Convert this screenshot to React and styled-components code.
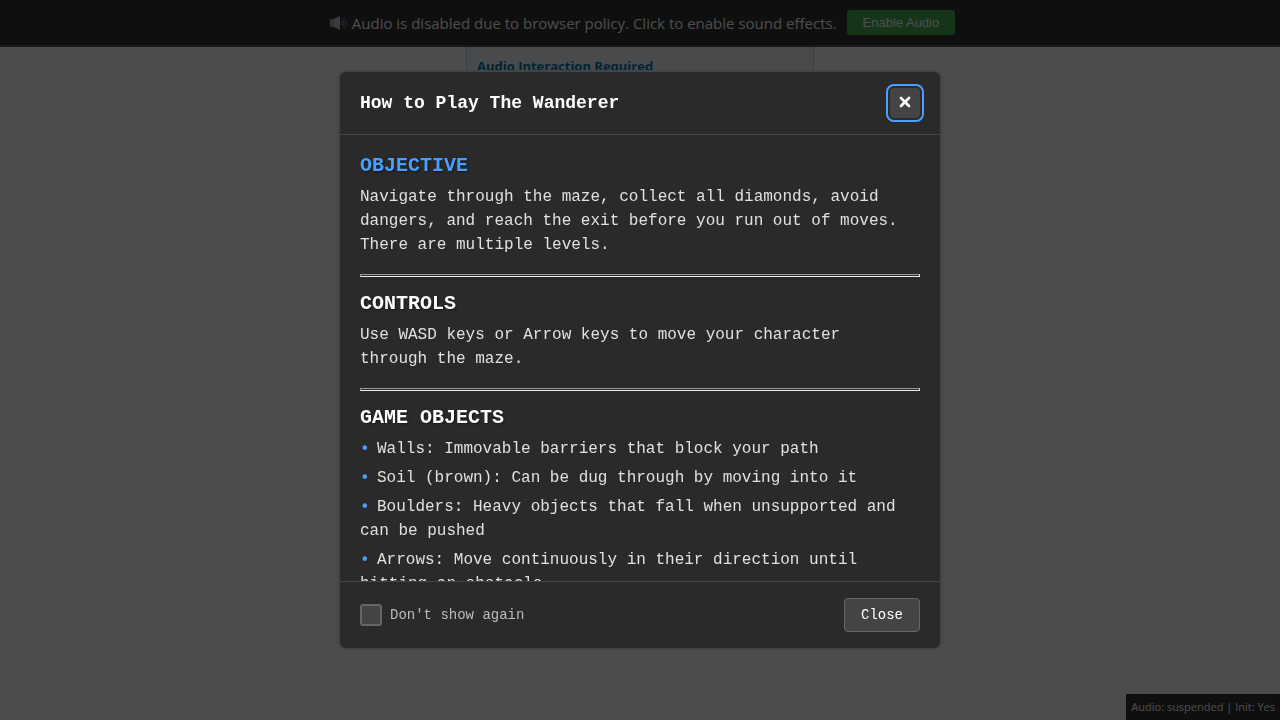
import React from "react";
import styled, { createGlobalStyle } from "styled-components";

const GlobalStyle = createGlobalStyle`
  *, *::before, *::after { box-sizing: border-box; }
  body { margin: 0; background: #fff; font-family: "Open Sans", "Noto Sans", sans-serif; }
  h1, h2, h3, p, ul { margin: 0; padding: 0; }
`;

const mono = `"Courier New", "Liberation Mono", monospace`;

const Page = styled.div`
  min-height: 100vh;
`;

const AudioBanner = styled.header`
  display: flex;
  align-items: center;
  justify-content: center;
  gap: 10px;
  height: 47px;
  padding: 0 10px 0 14px;
  background: #333;
  border-bottom: 2px solid #555;
  color: #fff;
  font-size: 15px;
  line-height: 24px;
`;

const BannerText = styled.span`
  display: flex;
  align-items: center;
  gap: 5px;
`;

const EnableButton = styled.button`
  height: 25px;
  padding: 0 16px;
  border: 0;
  border-radius: 3px;
  background: #4caf50;
  color: #fff;
  font: 13px "Liberation Sans", Arial, sans-serif;
`;

const Notice = styled.section`
  width: 348px;
  max-width: 100%;
  margin: 0 auto;
  padding: 9px 10px;
  background: #f0f8ff;
  border: 1px solid #b0d4f1;
  border-top: 0;
  color: #333;
  line-height: 20px;
`;

const NoticeTitle = styled.h3`
  color: #0077b6;
  font-size: 13px;
  font-weight: 700;
`;

const AudioStatus = styled.div`
  position: fixed;
  right: 0;
  bottom: 0;
  padding: 5px;
  background: #333;
  color: #fff;
  font-size: 11px;
  line-height: 16px;
`;

const Overlay = styled.div`
  position: fixed;
  inset: 0;
  display: flex;
  align-items: center;
  justify-content: center;
  background: rgba(0, 0, 0, 0.7);
`;

const Dialog = styled.div`
  display: flex;
  flex-direction: column;
  width: 90%;
  max-width: 600px;
  max-height: 80vh;
  border-radius: 6px;
  background: #2a2a2a;
  box-shadow: 0 0 0 2px #444;
  font-family: ${mono};
  overflow: hidden;
`;

const DialogHeader = styled.div`
  display: flex;
  align-items: center;
  justify-content: space-between;
  padding: 16px 20px;
  border-bottom: 1px solid #444;
`;

const DialogTitle = styled.h2`
  color: #fff;
  font-size: 18px;
  line-height: 24px;
`;

const IconButton = styled.button`
  display: flex;
  align-items: center;
  justify-content: center;
  width: 30px;
  height: 30px;
  padding: 0 0 2px;
  border: 0;
  border-radius: 4px;
  background: #444;
  color: #fff;
  outline: 2px solid #4a9eff;
  outline-offset: 2px;
`;

const DialogBody = styled.div`
  flex: 1;
  min-height: 0;
  padding: 20px;
  overflow-y: auto;
  scrollbar-width: none;
`;

const SectionTitle = styled.h3`
  margin-bottom: 8px;
  color: ${(p) => (p.$accent ? "#4a9eff" : "#fff")};
  font-size: 20px;
  line-height: 22px;
  text-transform: uppercase;
  text-shadow: 1px 1px 2px rgba(0, 0, 0, 0.5);
`;

const Paragraph = styled.p`
  padding-right: 8px;
  color: #e0e0e0;
  font-size: 16px;
  line-height: 24px;
`;

const Divider = styled.hr`
  height: 3px;
  margin: 17px 0 16px;
  border: 1px solid;
  border-color: #9a9a9a #eee #eee #9a9a9a;
`;

const ObjectList = styled.ul`
  list-style: none;
`;

const ObjectItem = styled.li`
  margin-bottom: 5px;
  color: #e0e0e0;
  font-size: 16px;
  line-height: 24px;

  &::before {
    content: "•";
    display: inline-block;
    width: 17px;
    color: #4a9eff;
    font-weight: 700;
  }
`;

const DialogFooter = styled.div`
  display: flex;
  align-items: center;
  justify-content: space-between;
  padding: 16px 20px;
  border-top: 1px solid #444;
`;

const CheckLabel = styled.label`
  display: flex;
  align-items: center;
  gap: 8px;
  color: #bbb;
  font-size: 14px;
  line-height: 20px;
`;

const Checkbox = styled.input`
  appearance: none;
  width: 22px;
  height: 22px;
  margin: 0;
  border: 2px solid #666;
  border-radius: 3px;
  background: #444;

  &:checked { background: #4a9eff; }
`;

const CloseButton = styled.button`
  height: 34px;
  padding: 0 16px;
  border: 1px solid #666;
  border-radius: 4px;
  background: #444;
  color: #fff;
  font: 14px ${mono};
`;

function SpeakerIcon() {
  return (
    <svg width="18" height="16" viewBox="0 0 18 16" aria-hidden="true">
      <path d="M1 4h5v8H1z" fill="#aaa4b0" />
      <path d="M5 4l6-3v14l-6-3z" fill="#c8c2ce" />
      <path
        d="M12 5.500q2 2.500 0 5M13.500 3.500q3 4.500 0 9M15 2q4 6 0 12"
        fill="none"
        stroke="#5595d0"
        strokeWidth="1"
      />
    </svg>
  );
}

const objects = [
  "Walls: Immovable barriers that block your path",
  "Soil (brown): Can be dug through by moving into it",
  "Boulders: Heavy objects that fall when unsupported and can be pushed",
  "Arrows: Move continuously in their direction until hitting an obstacle",
];

export default function App() {
  return (
    <Page>
      <GlobalStyle />
      <AudioBanner>
        <BannerText>
          <SpeakerIcon />
          Audio is disabled due to browser policy. Click to enable sound effects.
        </BannerText>
        <EnableButton type="button">Enable Audio</EnableButton>
      </AudioBanner>
      <Notice>
        <NoticeTitle>Audio Interaction Required</NoticeTitle>
      </Notice>
      <AudioStatus>Audio: suspended | Init: Yes</AudioStatus>
      <Overlay>
        <Dialog role="dialog" aria-modal="true" aria-labelledby="help-title">
          <DialogHeader>
            <DialogTitle id="help-title">How to Play The Wanderer</DialogTitle>
            <IconButton type="button" aria-label="Close dialog">
              <svg width="12" height="12" viewBox="0 0 12 12" aria-hidden="true">
                <path
                  d="M2 2l8 8M10 2L2 10"
                  stroke="#fff"
                  strokeWidth="2.600"
                  strokeLinecap="round"
                />
              </svg>
            </IconButton>
          </DialogHeader>
          <DialogBody>
            <SectionTitle $accent>Objective</SectionTitle>
            <Paragraph>
              Navigate through the maze, collect all diamonds, avoid dangers, and reach the exit
              before you run out of moves. There are multiple levels.
            </Paragraph>
            <Divider />
            <SectionTitle>Controls</SectionTitle>
            <Paragraph>
              Use WASD keys or Arrow keys to move your character through the maze.
            </Paragraph>
            <Divider />
            <SectionTitle>Game Objects</SectionTitle>
            <ObjectList>
              {objects.map((text) => (
                <ObjectItem key={text}>{text}</ObjectItem>
              ))}
            </ObjectList>
          </DialogBody>
          <DialogFooter>
            <CheckLabel>
              <Checkbox type="checkbox" />
              Don't show again
            </CheckLabel>
            <CloseButton type="button">Close</CloseButton>
          </DialogFooter>
        </Dialog>
      </Overlay>
    </Page>
  );
}
